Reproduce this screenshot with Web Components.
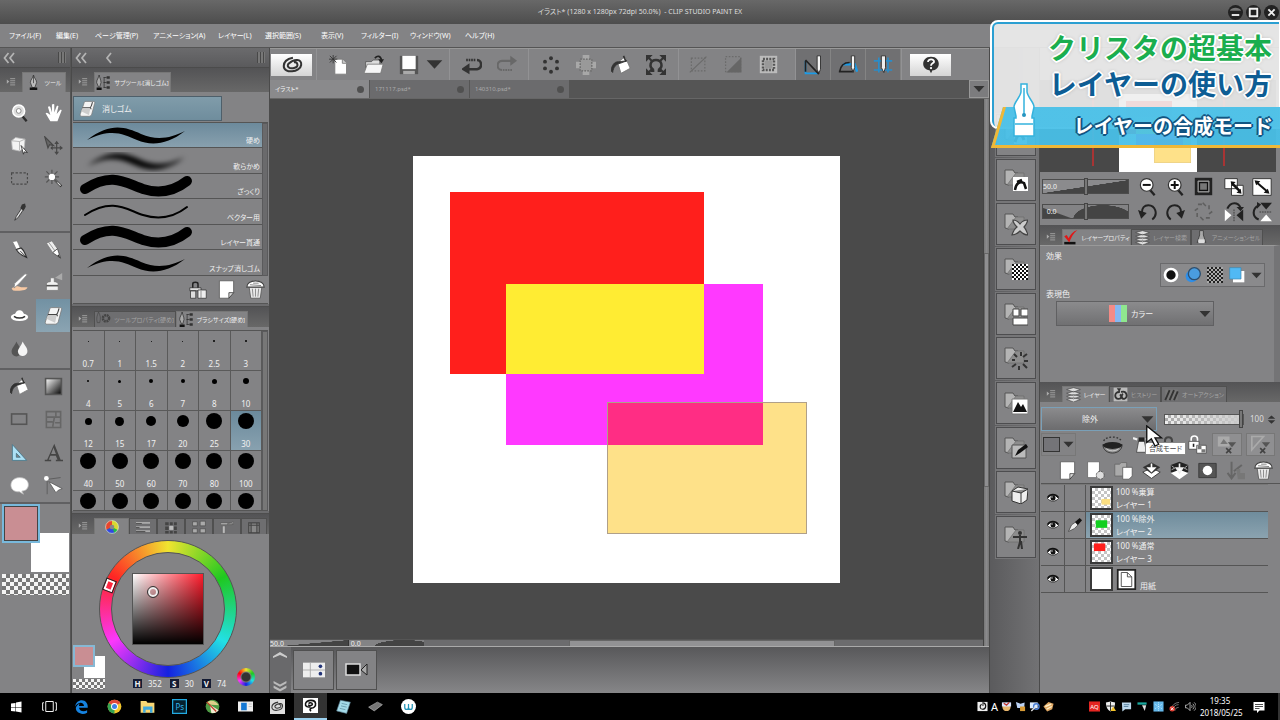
<!DOCTYPE html>
<html lang="ja">
<head>
<meta charset="utf-8">
<meta name="viewport" content="width=device-width, initial-scale=1">
<title>CLIP STUDIO PAINT EX</title>
<style>
body{margin:0;background:#4a4a4a;color:#f0f0f0;font:8px/12px "Noto Sans","Noto Sans CJK JP",sans-serif;font-feature-settings:"palt"}
</style>
</head>
<body>
<paint-app></paint-app>
<script>
const W='#f4f4f4', K='#2c2c2c', G='#6c6c6c';
const folder='<path d="M1 16V2h8l2 3h3L5 17z" fill="#b4b4b4" stroke="#555"/><path d="M3 17 12 5h8v12z" fill="#8d8d8d" stroke="#666" stroke-width=".6"/>';
/* every glyph is drawn on a 24 x 24 field */
const ICONS={
 zoom:`<path d="M16 17l5 6" stroke="${K}" stroke-width="3"/><circle cx="11" cy="10" r="7.5" fill="#ddd" stroke="#fff" stroke-width="2"/><circle cx="11" cy="10" r="3" fill="#fff" stroke="#777"/>`,
 hand:`<path d="M8 23 2 13c1-1 2-1 3 0l3 2L5 5c1-1 2-1 3 0l2 7V2c1-1 3-1 3 0v10l3-8c1-1 3 0 2 1l-2 9 4-5c1-1 3 0 2 1l-5 13z" fill="#fff"/>`,
 cube:`<path d="M2 6 7 2l12 2-1 11-6 4-9-2z" fill="#f3f3f3" stroke="#bbb"/><path d="M2 6l10 1 7-3M12 7v11" fill="none" stroke="#aaa"/><path d="M14 12l8 9-4-1-1 3z" fill="#fff" stroke="${K}"/>`,
 move:`<path d="M1 1l4 14 2-4 5 1z" fill="#666" stroke="#484848" stroke-width="1.5"/><path d="M16 8v13M9 15h13" stroke="#484848" stroke-width="1.5"/><path d="M16 6l-3 4h6zM16 24l-3-4h6zM24 15l-4-3v6zM8 15l3-3v6z" fill="#484848"/>`,
 marquee:`<rect x="2" y="5" width="20" height="14" fill="none" stroke="#4a4a4a" stroke-width="1.5" stroke-dasharray="3 2"/>`,
 wand:`<path d="M10 10l12 12" stroke="#333" stroke-width="3"/><path d="M10 10l11 11" stroke="#ddd" stroke-width="1.500"/><path d="M10 1v18M1 10h18M3 3l14 14M17 3 3 17" stroke="#555" stroke-width="1.500"/><circle cx="10" cy="10" r="4" fill="#fff"/>`,
 dropper:`<path d="M16 6 8 18 6 23l4-3 8-12z" fill="#ddd" stroke="${K}"/><path d="M15 3l4-1 1 4-3 5-4-3z" fill="#333"/>`,
 pen:`<path d="M3 2 9 1l4 9-5 2z" fill="#fff" stroke="#777"/><path d="M8 12l6-2c4 3 5 7 7 12-5-2-10-4-13-10z" fill="#eee" stroke="#333" stroke-width="1.500"/><path d="M13 14l8 8" stroke="#222"/>`,
 pencil:`<path d="M3 4 10 1l7 10-6 5z" fill="#eee" stroke="#777"/><path d="M6 3l8 11" stroke="#888"/><path d="M11 16l6-5 4 12z" fill="#fff" stroke="#444"/><path d="M18 18l3 5-4-3z" fill="#222"/>`,
 brush:`<path d="M2 20c4-5 8-4 12-2l8 0c0 4-10 5-18 4z" fill="#f7c9a4"/><path d="M22 2 11 14l-6 5 1-6L19 1z" fill="#fff" stroke="#888"/>`,
 air:`<path d="M14 6l9-6v9z" fill="#aaa"/><path d="M3 22V15c0-3 2-4 5-4V6h5v5c3 0 5 1 5 4v7z" fill="#f1f1f1" stroke="#777"/><path d="M3 16h15" stroke="#555" stroke-width="2"/>`,
 deco:`<path d="M6 12C7 3 17 3 18 12z" fill="#fff"/><ellipse cx="12" cy="14" rx="11" ry="5" fill="#fff"/><path d="M5 13c4 3 10 3 14 0" fill="none" stroke="#333" stroke-width="2"/>`,
 eraser:`<path d="M10 2h10c2 0 3 1 2 3l-4 15c-1 2-2 3-4 3H4c-2 0-3-1-2-4L7 5c0-2 1-3 3-3z" fill="#f4f4f4" stroke="#777"/><path d="M5 11h10c2 0 2 1 2 2M15 11c1 0 3-4 4-8" fill="none" stroke="#444" stroke-width="1.500"/><path d="M3 16l2-4h11l-2 9z" fill="#ccc"/>`,
 blend:`<path d="M8 3c3 6 6 8 6 13a6 6 0 0 1-12 0C2 11 6 9 8 3z" fill="#555"/><path d="M16 3c3 6 6 8 6 12a6 6 0 0 1-12 1c0-4 4-7 6-13z" fill="#f5f5f5"/>`,
 fill:`<path d="M8 9 17 2l6 14-11 6z" fill="#fff" stroke="#777"/><path d="M15 1l3 7" stroke="#333" stroke-width="2"/><path d="M19 7l-8 3C6 11 3 14 2 21l-2-2c1-7 4-11 9-11z" fill="#333" stroke="#333"/>`,
 grad:`<defs><linearGradient id="a" x1="0" y1="0" x2="1" y2="1"><stop stop-color="#fff"/><stop offset="1" stop-color="#000"/></linearGradient></defs><rect x="2" y="2" width="20" height="20" fill="url(#a)" stroke="#555" stroke-width="2"/>`,
 rect:`<rect x="2" y="5" width="19" height="13" fill="none" stroke="#555" stroke-width="2"/>`,
 frame:`<path d="M3 2h18v20H3zM3 9h18M15 2v7M13 10l-2 11M4 15h7M14 16h6" fill="none" stroke="#666" stroke-width="2"/>`,
 ruler:`<path d="M3 2l18 20H3zM8 13v5h5z" fill="#ace0f5" fill-rule="evenodd" stroke="#417184"/>`,
 text:`<path d="M13 1l8 20h3v2h-9v-2h2l-2-5H8l-2 5h3v2H1v-2h3zM12 6l-3 8h6z" fill="#454545"/>`,
 balloon:`<path d="M12 2c15 0 14 17 3 17l2 4-5-3C-3 21-2 2 12 2z" fill="#fff" stroke="#bbb"/>`,
 line:`<path d="M4 3v20M0 4h6l15-2" fill="none" stroke="#555"/><circle cx="3" cy="3" r="3" fill="#fff"/><path d="M6 7l17 9-5 2-3 3z" fill="#fff" stroke="#555"/>`,
 hut:`<path d="M1 9h15v4H1zM2 13h7v10H2z" fill="#ddd" stroke="#333"/><path d="M12 12h11v11H12z" fill="#eee" stroke="#333"/><path d="M16 13v10" stroke="#777"/><path d="M5 9V4c0-3 7-3 7 0v5" fill="none" stroke="#222" stroke-width="2"/>`,
 page:`<path d="M3 1h18v15l-6 7H3z" fill="#fff" stroke="#555"/><path d="M21 16h-6v7z" fill="#ddd" stroke="#333"/>`,
 trash:`<path d="M4 9h16l-2 14H6z" fill="#e8e8e8" stroke="#555"/><path d="M8 11l1 10M12 11v10M16 11l-1 10" stroke="#777"/><path d="M1 9c0-5 5-8 11-8s11 3 11 8z" fill="#fff" stroke="#444" stroke-width="1.5"/><path d="M5 6l14 1M9 4h7" stroke="#666"/>`,
 spiral:`<path d="M14 9c4-1 6 5 1 6-6 2-10-2-6-5 5-5 14-5 13 2-1 8-19 10-19 1C3 8 8 5 13 4" fill="none" stroke="#333" stroke-width="2.2"/>`,
 newdoc:`<path d="M7 5h9l5 5v13H7z" fill="#fff" stroke="#777"/><path d="M16 5v5h5" fill="#ccc" stroke="#777"/><path d="M5 0v10M0 5h10M1 1l8 8M9 1L1 9" stroke="#333"/>`,
 open:`<path d="M2 8h7l2-2h8v16H2z" fill="#ddd" stroke="#555"/><path d="M0 22 4 11h19l-3 11z" fill="#f6f6f6" stroke="#777"/><path d="M13 4c3-4 7-3 8 2" fill="none" stroke="#222" stroke-width="2"/><path d="M17 5h7l-3 5z" fill="#222"/>`,
 save:`<path d="M1 1h22v22H1z" fill="#555"/><path d="M4 1h16v16H4z" fill="#fff"/><path d="M5 19h14v4H5z" fill="#aaa"/>`,
 down:`<path d="M1 6h22L12 18z" fill="#333"/>`,
 undo:`<path d="M4 17h14c7-1 6-11 0-11" fill="none" stroke="#333" stroke-width="3"/><path d="M9 10v13L-1 17z" fill="#333"/><path d="M5 6h12" stroke="#333" stroke-width="3" stroke-dasharray="2 1"/>`,
 redo:`<path d="M20 7H6c-7 0-7 11 0 11" fill="none" stroke="#686868" stroke-width="2.5"/><path d="M16 1v12l8-6z" fill="#686868"/><path d="M7 18h12" stroke="#686868" stroke-width="2.500" stroke-dasharray="2 1"/>`,
 dots:`<g fill="#333"><circle cx="12" cy="3" r="2.600"/><circle cx="20" cy="7.500" r="2.600"/><circle cx="20" cy="16.500" r="2.600"/><circle cx="12" cy="21" r="2.600"/><circle cx="4" cy="16.500" r="2.600"/><circle cx="4" cy="7.500" r="2.600"/></g>`,
 outer:`<path d="M8 0h8v24H8zM0 8h24v8H0z" fill="#a8a8a8"/><rect x="5" y="5" width="14" height="14" fill="#999" stroke="#666" stroke-width="1.5" stroke-dasharray="2 1.5"/>`,
 scale:`<path d="M9 18c-6-4-4-12 3-12s9 8 3 12M6 19h4M14 19h4" fill="none" stroke="#333" stroke-width="3"/><path d="M2 2l6 6M22 2l-6 6M2 22l5-5M22 22l-5-5" stroke="#333" stroke-width="2.5"/><path d="M0 0h8l-8 8zM24 0h-8l8 8zM0 24h8l-8-8zM24 24h-8l8-8z" fill="#333"/>`,
 nosel:`<rect x="3" y="4" width="17" height="16" fill="none" stroke="#6b6b6b" stroke-width="1.5" stroke-dasharray="2 2"/><path d="M1 22 22 2" stroke="#6b6b6b" stroke-width="1.5"/>`,
 invsel:`<path d="M2 2h19v19H2z" fill="none" stroke="#6b6b6b" stroke-width="1.5" stroke-dasharray="2 2"/><path d="M22 3v19H3z" fill="#666"/>`,
 selb:`<path d="M1 1h22v22H1z" fill="#bbb"/><path d="M7 7h10v10H7z" fill="#999"/><path d="M5 5h14v14H5z" fill="none" stroke="#555" stroke-width="3" stroke-dasharray="2.500 1.500"/>`,
 snap1:`<path d="M3 7v15h15" fill="none" stroke="#1a9be8" stroke-width="2"/><path d="M3 6l16 17M3 7v13" fill="none" stroke="#222" stroke-width="2"/><path d="M17 1h4v16l-2 5-2-5z" fill="#f4f4f4" stroke="#222"/>`,
 snap2:`<path d="M6 11h14l3 9" fill="none" stroke="#1a9be8" stroke-width="3"/><path d="M2 20c1-7 5-11 12-11M1 20h18" fill="none" stroke="#222" stroke-width="2"/><path d="M16 1h4v14l-2 5-2-5z" fill="#f4f4f4" stroke="#222"/>`,
 snap3:`<path d="M1 7h22M1 18h22M7 3v18M18 3v18" stroke="#2a8cc8" stroke-width="2"/><path d="M10 1h5v14l-2 6-3-6z" fill="#eee" stroke="#222"/>`,
 help:`<path d="M12 1c14 0 13 18 2 18l-2 4-2-4C-2 18-1 1 12 1z" fill="#333"/><path d="M8 8c0-5 9-4 8 0-1 2-4 2-4 5" fill="none" stroke="#fff" stroke-width="2.4"/><circle cx="12" cy="16" r="1.5" fill="#fff"/>`,
 nib:`<path d="M12 0c1 5 5 8 5 12l-3 8H10L7 12c0-4 4-7 5-12z" fill="#bbb" stroke="#222"/><path d="M12 2v11" stroke="#222"/><path d="M6 20h12v4H6z" fill="#111"/>`,
 nodes:`<path d="M5 0c1 5 3 8 3 12l-2 7H4l-3-7c0-4 3-7 4-12z" fill="#aaa" stroke="#222"/><path d="M1 20h8v4H1z" fill="#111"/><path d="M12 4h5M12 12h5M12 20h5M13 4v16" stroke="#222"/><path d="M17 2h5v4h-5zM17 10h5v4h-5zM17 18h5v4h-5z" fill="#333"/>`,
 gear:`<path d="M4 0c3 6 4 9 2 17l-4 0c-2-8 0-11 2-17z" fill="none" stroke="#444"/><circle cx="16" cy="10" r="5" fill="none" stroke="#444" stroke-width="4" stroke-dasharray="3 1"/>`,
 bars:`<path d="M0 5h24M0 12h24M0 19h24" stroke="#aaa" stroke-width="3"/><path d="M0 6h10M0 13h6M0 20h16" stroke="#555" stroke-width="2"/>`,
 around:`<path d="M2 4h6v5H2zM10 4h5v5h-5zM17 4h5v5h-5zM2 11h6v6H2zM17 11h5v6h-5zM2 19h6v4H2zM10 19h5v4h-5zM17 19h5v4h-5z" fill="#444"/><path d="M9 10h7v7H9z" fill="#bbb"/>`,
 mixsq:`<path d="M1 3h8v7H1zM14 2h9v8h-9zM1 15h8v7H1zM14 15h9v7h-9z" fill="#aaa" stroke="#444"/>`,
 hist:`<path d="M1 5h20v3H1zM4 10h5v13H4zM12 7l11-4v4z" fill="#bbb" stroke="#555"/>`,
 film:`<path d="M3 5h18v17H3zM3 9h18M7 5v17M17 5v17" fill="#888" stroke="#444" stroke-width="2"/>`,
 zminus:`<path d="M15 16l6 7" stroke="#222" stroke-width="3"/><circle cx="11" cy="10" r="8" fill="#fff" stroke="#333" stroke-width="1.5"/><path d="M6 10h10" stroke="#111" stroke-width="2.5"/>`,
 zplus:`<path d="M15 16l6 7" stroke="#222" stroke-width="3"/><circle cx="11" cy="10" r="8" fill="#fff" stroke="#333" stroke-width="1.5"/><path d="M6 10h10M11 5v10" stroke="#111" stroke-width="2.5"/>`,
 fit:`<path d="M1 1h22v22H1z" fill="#222"/><path d="M5 5h14v14H5z" fill="#777" stroke="#aaa"/><path d="M7 7h10v10H7z" fill="#777" stroke="#111" stroke-width="1.5"/>`,
 win2:`<path d="M1 2h15v12H1zM9 10h14v12H9z" fill="#fff" stroke="#222"/><path d="M10 8l9 9" stroke="#111" stroke-width="3"/><path d="M8 5l6 1-5 5zM21 20l-6-1 5-5z" fill="#111"/>`,
 win1:`<path d="M1 2h22v20H1z" fill="#fff" stroke="#222"/><path d="M5 6l14 12" stroke="#111" stroke-width="2.5"/><path d="M3 4l7 1-5 5zM21 20l-7-1 5-5z" fill="#111"/>`,
 rotl:`<path d="M18 22c8-6 4-18-5-18-5 0-8 4-8 9" fill="none" stroke="#222" stroke-width="2.500"/><path d="M0 10l11 4-7 7z" fill="#222"/>`,
 rotr:`<path d="M6 22C-2 16 2 4 11 4c5 0 8 4 8 9" fill="none" stroke="#222" stroke-width="2.500"/><path d="M24 10l-11 4 7 7z" fill="#222"/>`,
 burst:`<g stroke="#5f5f5f" stroke-width="2"><path d="M11 1l4 4M19 4l0 5M23 12l-4 3M20 20h-5M12 23l-4-4M4 19v-5M1 11l4-3M5 3h5"/></g>`,
 fliph:`<path d="M4 8C8-1 17 0 20 7" fill="none" stroke="#222" stroke-width="2.5"/><path d="M15 6h9l-4 5z" fill="#222"/><path d="M1 9v14l8-7z" fill="#fff"/><path d="M23 9v14l-8-7z" fill="#222"/><path d="M12 9v15" stroke="#333" stroke-dasharray="2 1"/>`,
 flipv:`<path d="M8 4c-8 4-8 14 0 17" fill="none" stroke="#222" stroke-width="2.5"/><path d="M6 0v8l5-5z" fill="#222"/><path d="M10 1h14l-7 8z" fill="#222"/><path d="M10 23h14l-7-8z" fill="#fff"/><path d="M9 12h15" stroke="#333" stroke-dasharray="2 1"/>`,
 check:`<path d="M2 19h18v4H2z" fill="#111"/><path d="M2 10l4-2 3 5C12 7 16 2 23 0 16 6 13 12 10 20z" fill="#e01818"/>`,
 stack:`<path d="M1 4l11-3 11 3-11 4zM1 10l11-3 11 3-11 4zM1 15l11-3 11 3-11 4zM1 20l11-3 11 3-11 4z" fill="#ddd" stroke="#444"/>`,
 flask:`<path d="M9 1h6v7l4 12H5L9 8z" fill="#aaa" stroke="#444" stroke-width="1.5"/><path d="M7 15h10v6H7z" fill="#ddd"/>`,
 histy:`<path d="M1 1h22v22H1z" fill="#bbb"/><path d="M11 8c-10-1-9 12-2 11 5 0 5-5 2-7M13 8c9-3 12 9 5 11-5 0-5-6-2-8" fill="none" stroke="#333" stroke-width="3"/><path d="M6 2h7l-3 6z" fill="#333"/>`,
 clap:`<path d="M2 4h20v17H2z" fill="#777"/><path d="M2 21 9 5M9 21l7-16M16 21l6-14" stroke="#333" stroke-width="3"/>`,
 circle:`<circle cx="12" cy="12" r="9" fill="#111" stroke="#fff" stroke-width="4"/>`,
 tone:`<circle cx="10" cy="14" r="9" fill="#2f8fe8"/><circle cx="14" cy="10" r="9" fill="#4a9de0" stroke="#2d4f70" stroke-width="2"/>`,
 chk:`<path d="M0 0h24v24H0z" fill="#aaa"/><path d="M1.500 0v24M7.500 0v24M13.500 0v24M19.500 0v24" stroke="#222" stroke-width="3" stroke-dasharray="3"/><path d="M4.500 3v21M10.500 3v21M16.500 3v21M22.500 3v21" stroke="#222" stroke-width="3" stroke-dasharray="3"/>`,
 layc:`<path d="M6 6h17v17H6z" fill="#fff"/><path d="M1 1h17v17H1z" fill="#51b9f4" stroke="#3d86b0"/>`,
 clipmask:`<path d="M1 12c0 13 22 13 22 0z" fill="#888" stroke="#333"/><ellipse cx="12" cy="13" rx="11" ry="4" fill="#222"/><path d="M5 17c4 3 10 3 14 0" stroke="#ddd" fill="none"/><path d="M2 8c2-6 18-6 20 0" fill="none" stroke="#333" stroke-width="1.500" stroke-dasharray="2"/>`,
 light:`<path d="M8 7h8l3 16H5z" fill="#eee" stroke="#333"/><path d="M8 2h8v6H8z" fill="#222"/><path d="M0 3l6 2M24 3l-6 2" stroke="#eee" stroke-width="3"/>`,
 lock:`<path d="M7 11V7c0-7 10-7 10 0v4" fill="none" stroke="#444" stroke-width="3"/><path d="M4 11h16v12H4z" fill="#777" stroke="#333"/>`,
 lockpx:`<path d="M4 8V5c0-5 8-5 8 0v3" fill="none" stroke="#fff" stroke-width="2"/><path d="M1 8h13v10H1z" fill="#fff" stroke="#444"/><path d="M7 11v4" stroke="#222" stroke-width="2"/><path d="M11 13h12v10H11z" fill="#fff" stroke="#444"/><path d="M12 14h5v4h-5zM17 18h5v4h-5z" fill="#777"/>`,
 maskoff:`<path d="M1 3h14v12H1z" fill="#aaa"/><path d="M4 12l4-6 5 6z" fill="#777"/><path d="M13 10h10l-5 6z" fill="#555"/><path d="M11 17l6 6M17 17l-6 6" stroke="#444" stroke-width="2"/>`,
 ruleroff:`<path d="M1 3h14L1 19z" fill="none" stroke="#aaa" stroke-width="2"/><path d="M13 10h10l-5 6z" fill="#555"/><path d="M11 17l6 6M17 17l-6 6" stroke="#444" stroke-width="2"/>`,
 pageplus:`<path d="M2 1h15v20H2z" fill="#fff" stroke="#666"/><circle cx="18" cy="18" r="5" fill="#ddd" stroke="#444" stroke-dasharray="3 1"/>`,
 pagefold:`<path d="M1 4h6l2-2h7v17H1z" fill="#aaa" stroke="#666"/><path d="M11 8h12v11l-4 4h-8z" fill="#fff" stroke="#555"/>`,
 merge:`<path d="M1 14l11-5 11 5-11 8z" fill="#fff" stroke="#222"/><path d="M1 8l11-6 11 6-11 8z" fill="#333"/><path d="M12 3v8M8 9l4 4 4-4z" stroke="#fff" stroke-width="2" fill="#fff"/>`,
 merge2:`<path d="M1 5l11-4 11 4v9l-11 8-11-8z" fill="#222"/><path d="M1 15l11-4 11 4-11 8z" fill="#fff"/><path d="M2 6l4 3-4 2M22 6l-4 3 4 2" stroke="#ccc"/><path d="M12 3v7M8 9l4 6 4-6z" stroke="#eee" stroke-width="2" fill="#fff"/>`,
 mask:`<path d="M1 3h22v18H1z" fill="#555" stroke="#333"/><circle cx="12" cy="12" r="6" fill="#fff"/>`,
 apply:`<path d="M7 1v20M2 15l5 7 5-7M10 13l10-8" stroke="#666" stroke-width="2.500" fill="none"/><path d="M13 10h5v5h6v8h-9z" fill="#777"/>`,
 eye:`<path d="M1 13C6 5 17 4 23 13 17 20 7 20 1 13z" fill="#fff" stroke="#111" stroke-width="1.5"/><circle cx="12" cy="12" r="5" fill="#111"/><circle cx="10" cy="10" r="1.3" fill="#fff"/><path d="M1 11C6 3 17 3 23 11" fill="none" stroke="#111" stroke-width="3"/>`,
 inkpen:`<path d="M1 23 6 12l7-5 4 5-6 6z" fill="#eee" stroke="#222"/><path d="M12 7 20 0l4 4-7 8z" fill="#111"/>`,
 paper:`<path d="M2 1h20v22H2z" fill="#fff" stroke="#222" stroke-width="2"/><path d="M6 4h7l5 5v11H6zM13 4v5h5" fill="#fff" stroke="#444"/>`,
 f0:folder+`<path d="M10 10h13v11H10z" fill="#fff"/><path d="M11 19c3-10 7-8 9-2" stroke="#111" stroke-width="3" fill="none"/>`,
 f1:folder+`<path d="M9 9h15v14H9z" fill="#fff"/><path d="M11 22c1-7 5-9 9-7l2 6M13 14l5-2" stroke="#111" stroke-width="2.5" fill="none"/>`,
 f2:folder+`<path d="M9 8c3 0 5 1 7 4 2-3 5-4 8-4-1 3-2 5-4 7 2 2 3 5 4 8-3 0-6-2-8-4-2 2-5 4-8 4 1-3 2-6 5-8-2-2-4-4-4-7z" fill="#ccc" stroke="#444" stroke-width="1.2"/>`,
 f3:folder+`<path d="M8 7h16v16H8z" fill="#fff"/><path d="M9 7v16M13 7v16M17 7v16M21 7v16" stroke="#111" stroke-width="2" stroke-dasharray="2"/><path d="M11 9v14M15 9v14M19 9v14M23 9v14" stroke="#111" stroke-width="2" stroke-dasharray="2"/>`,
 f4:folder+`<path d="M9 7h6v7H9zM17 7h7v7h-7zM9 16h15v7H9z" fill="#fff" stroke="#444"/>`,
 f5:folder+`<path d="M10 8l3 3M17 6v4M23 8l-4 3M24 15h-4M23 22l-4-4M15 24v-4M8 21l4-3M8 14h3" stroke="#333" stroke-width="2"/>`,
 f6:folder+`<path d="M8 8h16v15H8z" fill="#fff" stroke="#777"/><path d="M9 21l5-10 3 5 2-3 4 8z" fill="#111"/>`,
 f7:folder+`<path d="M8 9h14v13H8z" fill="#bbb" stroke="#555"/><path d="M11 20l3-6 8-6 2 3-8 6z" fill="#111"/>`,
 f8:folder+`<path d="M8 11l6-4 10 2-1 11-6 4-9-3zM8 11l9 2 7-4M17 13v11" fill="#eee" stroke="#333"/>`,
 f9:folder+`<circle cx="16" cy="8" r="2" fill="#333"/><path d="M9 12h14M16 10v7l-2 7M17 16l1 8" stroke="#333" stroke-width="2" fill="none"/>`,
 chevup:`<path d="M12 7 0 14v3l12-5 12 5v-3z" fill="#ccc"/>`,
 chevdn:`<path d="M12 11 1 5v4l11 6 11-6V5zM12 19 1 13v4l11 6 11-6v-4z" fill="#bbb"/>`,
 timeline:`<path d="M0 4h24v16H0z" fill="#eee"/><path d="M0 12h24M8 4v16" stroke="#aaa"/><circle cx="19" cy="8" r="2" fill="#237"/><circle cx="19" cy="16" r="2" fill="#237"/>`,
 camera:`<path d="M1 6h14v11H1z" fill="#111" stroke="#ddd" stroke-width="1.500"/><path d="M16 12l6-6v11z" fill="#aaa" stroke="#222"/>`,
 winlogo:`<path d="M2 5l9-1v8H2zM12 3l11-2v11H12zM2 13h9v8l-9-1zM12 13h11v10l-11-2z" fill="#fff"/>`,
 taskview:`<path d="M6 4h12v16H6zM3 6H1v12h2M21 6h2v12h-2" fill="none" stroke="#fff" stroke-width="1.500"/>`,
 edge:`<path d="M2 12C3 2 15-1 20 6c2 3 2 5 2 8H8c1 6 8 7 13 4v4C12 27 2 21 3 14c1-4 4-6 7-7-2 1-2 3-2 4h8c0-6-9-8-14 1z" fill="#1683e0"/>`,
 chrome:`<circle cx="12" cy="12" r="11" fill="#f2c62c"/><path d="M12 12 2.500 6.500A11 11 0 0 1 21.500 6.500z" fill="#e0483a"/><path d="M12 12 2.500 6.500A11 11 0 0 0 12 23z" fill="#34a353"/><circle cx="12" cy="12" r="5.500" fill="#fff"/><circle cx="12" cy="12" r="4" fill="#3c80e8"/>`,
 explorer:`<path d="M1 3h9l2 3h11v16H1z" fill="#f8d775"/><path d="M5 12h15v10h-4v-5H9v5H5z" fill="#3fa9dd"/>`,
 pschop:`<path d="M1 1h22v22H1z" fill="#05202e" stroke="#22a9e0" stroke-width="2"/>`,
 paintapp:`<circle cx="12" cy="12" r="11" fill="#4f9b45"/><path d="M2 6c7-6 16-3 20 4L10 9z" fill="#ddd08a"/><path d="M8 9l14 9c-4 5-9 5-12 4z" fill="#f2ead1"/><path d="M3 5l15 15" stroke="#c03b28" stroke-width="2"/>`,
 appwin:`<path d="M0 4h24v16H0z" fill="#eee"/><path d="M5 6h9v12H5z" fill="#1478d4"/><path d="M17 8h5M17 12h5" stroke="#aaa"/>`,
 studio:`<path d="M0 0h24v24H0z" fill="#ddd"/><path d="M14 9c4-1 5 4 1 5-6 2-9-1-6-4 5-4 12-4 11 2-1 7-17 9-17 1 0-4 5-7 10-8" fill="none" stroke="#333" stroke-width="1.700"/>`,
 paint:`<path d="M0 0h24v24H0z" fill="#fff"/><path d="M12 14c-4 1-9 0-8-5C6 2 20 2 20 9c1 5-4 7-6 7-3 1-4 3-1 5M9 9c1-2 6-2 6 1 0 2-4 3-7 1" fill="none" stroke="#111" stroke-width="2.500"/>`,
 note:`<path d="M7 2l16 3-6 18-16-4z" fill="#a5dbe9" stroke="#578"/><path d="M9 7l9 2M8 11l9 2M6 15l9 2" stroke="#4c7f94"/>`,
 tablet:`<path d="M1 13 15 5l8 4-13 10z" fill="#777" stroke="#bbb"/>`,
 wmark:`<circle cx="12" cy="12" r="12" fill="#fff"/><path d="M6 8v5c0 5 6 5 6 0V8v5c0 5 6 5 6 0V8" fill="none" stroke="#2394b8" stroke-width="2"/>`,
 ime:`<path d="M1 2h22v20H1z" fill="#eee"/><path d="M14 4c7 2 7 14-2 14-6 0-7-8-2-11" fill="none" stroke="#111" stroke-width="2.500"/><path d="M13 2v9" stroke="#111" stroke-width="2"/>`,
 t1:`<circle cx="12" cy="13" r="9" fill="#e7b56c"/><path d="M2 3h20v9H2z" fill="#dde7ff"/><path d="M6 5l6 4 6-6" stroke="#c4352c" stroke-width="3" fill="none"/>`,
 t2:`<path d="M2 2l10 4 9-3-1 12H5z" fill="#bcd3f5"/><path d="M11 12h11v10H11z" fill="#d89b36"/>`,
 t3:`<path d="M2 3h17v13H2z" fill="#ddecff"/><circle cx="16" cy="12" r="6" fill="none" stroke="#4b7fd6" stroke-width="3"/><path d="M5 22l9-9" stroke="#ddd" stroke-width="3"/>`,
 t4:`<path d="M1 12 12 2l11 4-3 12-11 5z" fill="#e0a865"/><path d="M5 12l13-5M8 18l11-6" stroke="#fff1ca" stroke-width="3"/>`,
 adobe:`<path d="M0 1h24v22H0z" fill="#e52521"/>`,
 shield:`<path d="M2 3l10-2 10 2c0 10-3 16-10 20C5 19 2 13 2 3z" fill="#eee"/><path d="M12 2v20M3 11h18" stroke="#222" stroke-width="2"/><path d="M12 22l6-10 6 10z" fill="#f4c42b"/>`,
 memo:`<path d="M2 3h20v15H9l-6 5z" fill="#bcd8ec"/><path d="M6 8h12M6 12h10" stroke="#58809c" stroke-width="2"/>`,
 pent:`<path d="M1 3h20v5H1z" fill="#18a79e"/><path d="M11 9h9l-3 13z" fill="#ddd"/>`,
 snow:`<path d="M1 1h22v22H1z" fill="#65b8ea"/><path d="M12 3v18M4 7l16 10M20 7 4 17" stroke="#c9ecff" stroke-width="2" stroke-dasharray="2"/>`,
 net:`<path d="M9 20C9 12 14 8 21 8M13 21c0-4 3-7 8-7M5 17C7 9 12 4 22 3" fill="none" stroke="#777" stroke-width="2"/><circle cx="7" cy="17" r="6" fill="#e03b2f"/><path d="M4 14l6 6M10 14l-6 6" stroke="#fff" stroke-width="2"/>`,
 vol:`<path d="M1 9h4l6-6v18l-6-6H1zM14 9c2 2 2 4 0 6M17 6c4 4 4 8 0 12M20 3c6 6 6 12 0 18" fill="none" stroke="#eee" stroke-width="1.500"/>`,
 notif:`<path d="M1 2h22v17H13l-5 5v-5H1z" fill="#fff"/><path d="M4 7h16M4 11h16M4 15h9" stroke="#111" stroke-width="1.500"/>`,
 minb:`<circle cx="12" cy="12" r="12" fill="#222"/><path d="M3 9c3-6 15-6 18 0z" fill="#777"/><path d="M6 16h12" stroke="#eee" stroke-width="3"/>`,
 maxb:`<circle cx="12" cy="12" r="12" fill="#222"/><path d="M6 6h12v12H6z" fill="none" stroke="#eee" stroke-width="3"/>`,
 closeb:`<circle cx="12" cy="12" r="12" fill="#222"/><path d="M7 7l10 10M17 7 7 17" stroke="#eee" stroke-width="3"/>`,
 pmenu:`<path d="M2 6v10l6-5z" fill="#aaa"/><path d="M10 4h12M10 9h12M10 14h12M10 19h12" stroke="#aaa" stroke-width="2"/>`,
 chev2:`<path d="M11 2 3 12l8 10M22 2l-8 10 8 10" fill="none" stroke="#b4b4b4" stroke-width="3.500"/>`,
 chev1:`<path d="M16 2 8 12l8 10" fill="none" stroke="#b4b4b4" stroke-width="3.500"/>`,
 spin:`<path d="M2 10h20L12 1zM2 14h20l-10 9z" fill="#333"/>`,
 wheelc:`<circle cx="12" cy="12" r="11" fill="#22b84a"/><path d="M12 12V1A11 11 0 0 1 22 17z" fill="#d8d830"/><path d="M12 12V1A11 11 0 0 0 2 17z" fill="#e8452c"/><path d="M12 12 2 17a11 11 0 0 0 14 5z" fill="#3348e0"/><circle cx="12" cy="12" r="4" fill="#888"/><circle cx="12" cy="12" r="11" stroke="#eee"/>`,
 cursor:`<path d="M3 1v18l5-4 4 8 4-2-4-7h7z" fill="#fff" stroke="#111" stroke-width="1.500"/>`
};
const BASE=`*{box-sizing:border-box}button,select,input{font:inherit;color:inherit;font-feature-settings:inherit}button{appearance:none;border:0;background:none;padding:0;margin:0;display:grid;place-items:center}`;
function define(name,css,html){
  customElements.define(name,class extends HTMLElement{
    connectedCallback(){
      if(this.shadowRoot)return;
      const t=document.createElement('template');
      t.innerHTML=`<style>${BASE}${css}</style>${typeof html==='function'?html(this):html}`;
      this.attachShadow({mode:'open'}).append(t.content.cloneNode(true));
    }
  });
}
const ic=(n,s=20)=>`<ui-icon name="${n}" size="${s}"></ui-icon>`;
const btn=(n,s,label)=>`<button aria-label="${label||n}">${ic(n,s)}</button>`;
const checker=(s)=>`repeating-conic-gradient(#777 0 25%,#f4f4f4 0 50%) 0 0/${s}px ${s}px`;

define('ui-icon',`:host{display:block;flex:none}svg{display:block}`,e=>{const s=e.getAttribute('size')||20;return `<svg width="${s}" height="${s}" viewBox="0 0 24 24" fill="none">${ICONS[e.getAttribute('name')]||''}</svg>`});

define('title-bar',`:host{display:grid;grid-template-columns:1fr auto 1fr;align-items:center;height:24px;background:linear-gradient(#686868,#4d4d4d);font-size:7px;color:#ddd}.w{display:flex;gap:3px;justify-content:end;padding-right:1px}`,
 `<span></span><span>イラスト* (1280 x 1280px 72dpi 50.0%)&nbsp; - CLIP STUDIO PAINT EX</span><div class="w">${btn('minb',15,'最小化')}${btn('maxb',15,'最大化')}${btn('closeb',15,'閉じる')}</div>`);

define('menu-bar',`:host{display:block;background:#838385;height:24px;border-bottom:1px solid #555}nav{display:grid;grid-template-columns:47px 39px 58px 65px 47px 56px 40px 49px 55px 1fr;padding-left:9px;height:100%;align-items:center;justify-items:start}button{white-space:nowrap;color:#fff;font-size:7px}`,
 `<nav>${['ファイル(F)','編集(E)','ページ管理(P)','アニメーション(A)','レイヤー(L)','選択範囲(S)','表示(V)','フィルター(I)','ウィンドウ(W)','ヘルプ(H)'].map(t=>`<button>${t}</button>`).join('')}</nav>`);

define('dock-head',`:host{display:flex;align-items:center;height:20px;gap:16px;padding:0 4px 0 3px;background:linear-gradient(#6b6b6d,#5a5a5c);border-bottom:1px solid #4b4b4b}i{margin-left:auto;width:8px;height:11px;background:repeating-linear-gradient(90deg,#484848 0 1px,#777 1px 3px)}`,
 e=>`${ic('chev2',12)}${e.hasAttribute('two')?ic('chev1',12):''}<i></i>`);

/* tab strip of a docked palette: each tab is "icon|label|width" */
define('panel-tabs',`:host{display:flex;align-items:stretch;padding:4px 4px 0 0;height:20px;background:linear-gradient(#535355,#686868)}.m{width:22px;display:grid;place-items:center;flex:none}button{display:flex;align-items:center;justify-content:center;gap:3px;background:#6e6e70;border:1px solid #505050;border-bottom:0;color:#a4a4a4;font-size:6px;white-space:nowrap;flex:none}button.on{background:#838385;color:#eee;border-color:#777}`,
 e=>`<span class="m">${ic('pmenu',10)}</span>`+e.getAttribute('tabs').split(';').map((t,i)=>{const[n,l,w]=t.split('|');return `<button style="width:${w}px" class="${i==(e.getAttribute('on')||0)?'on':''}" aria-label="${l||n}">${ic(n,e.getAttribute('isize')||15)}${l?`<span>${l}</span>`:''}</button>`}).join(''));

const tools=[['zoom','hand','cube','move','marquee','wand','dropper',''],['pen','pencil','brush','air','deco','eraser','blend',''],['fill','grad','rect','frame','ruler','text','balloon','line']];
define('tool-box',`:host{display:flex;flex-direction:column;width:71px;background:#838385;border-right:1px solid #555}
.g{display:grid;grid-template-columns:34px 34px;grid-auto-rows:33px;border-bottom:2px solid #606062;padding:0 0 3px 2px}.g.z{padding-bottom:0}.on{background:linear-gradient(#7291a3,#8ba4b2)}
.h{height:24px;margin-bottom:4px}.sw{display:grid;grid-template:29px 10px 29px/29px 9px 29px;padding:0 0 0 2px}.fg{grid-area:1/1/3/3;background:#c98e93;border:2px solid #78b9dc;outline:1px solid #444;outline-offset:-3px;z-index:1}.bg{grid-area:2/2/4/4;background:#fff}.tr{height:21px;margin:2px 1px 0 2px;background:${checker(8)}}`,
 `<dock-head></dock-head><panel-tabs class="h" tabs="nib|ツール|44"></panel-tabs>${tools.map((g,i)=>`<div class="g ${i==2?'z':''}">${g.map(n=>n?`<button aria-label="${n}" class="${n=='eraser'?'on':''}">${ic(n,19)}</button>`:'<span></span>').join('')}</div>`).join('')}<div class="sw"><span class="fg"></span><span class="bg"></span></div><div class="tr"></div>`);

const wave=(w)=>`<path d="M12 15C40-3 54 10 70 15S100 18 114 7" stroke="#000" stroke-width="${w}" stroke-linecap="round" fill="none"/>`;
const taper=f=>`<path d="M14 17C38-1 52 4 68 11S98 15 112 8C94 22 78 23 64 17S38 5 14 17z" fill="#000" ${f||''}/>`;
const brushes=[['硬め',taper()],['軟らかめ',`<defs><filter id="b"><feGaussianBlur stdDeviation="2.5"/></filter></defs>`+taper('filter="url(#b)"')],['ざっくり',wave(10)],['ベクター用',wave(2)],['レイヤー貫通',wave(10)],['スナップ消しゴム',taper()]];
define('brush-list',`:host{display:block;background:#838385;padding:4px 1px 0}.head{display:flex;align-items:center;gap:6px;width:149px;height:25px;padding-left:5px;background:linear-gradient(#809caa,#6f8d9d);border:1px solid #4e5f6a}
.l{display:grid;grid-template-columns:1fr 6px;border-top:1px solid #555;margin-top:1px}.r{display:grid;grid-template-columns:1fr auto;justify-content:stretch;width:100%;height:25px;border-bottom:1px solid #555;padding-right:2px}.r:nth-child(even){height:26px}.r svg{grid-area:1/1/2/3;justify-self:start;overflow:visible}.r span{grid-area:1/2/2/3;align-self:end;font-size:7px}.on{background:linear-gradient(#6c8a9c,#88a0ae)}.s{background:#6a6a6c;border:1px solid #5a5a5c}
.f{display:flex;justify-content:end;gap:10px;height:28px;align-items:center;padding-right:3px;border-bottom:1px solid #555}`,
 `<div class="head">${ic('eraser',17)}<span>消しゴム</span></div><div class="l"><div>${brushes.map(([n,s],i)=>`<button class="r ${i?'':'on'}"><svg width="130" height="24" viewBox="0 0 130 24">${s}</svg><span>${n}</span></button>`).join('')}</div><div class="s"></div></div><div class="f">${btn('hut',18,'複製')}${btn('page',19,'新規')}${btn('trash',19,'削除')}</div>`);

const sizes=[[.7,1],[1,1],[1.5,1],[2,1],[2.5,2],[3,2],[4,2],[5,3],[6,4],[7,4],[8,5],[10,6],[12,7],[15,9],[17,10],[20,12],[25,16],[30,16],[40,16],[50,16],[60,16],[70,16],[80,16],[100,16],['',16],['',16],['',16],['',16],['',16],['',16]];
define('size-grid',`:host{display:grid;grid-template-columns:1fr 6px;height:181px;overflow:hidden;background:#838385;border-top:1px solid #555;border-bottom:1px solid #555;margin:3px 1px 0}.g{display:grid;grid-template-columns:repeat(6,1fr);grid-auto-rows:40px}button{border:solid #5a5a5a;border-width:0 1px 1px 0;grid-template-rows:20px 19px;align-items:center}i{border-radius:50%;background:#000}span{padding-top:6px}.on{background:linear-gradient(#6b8a9c,#88a1af)}.s{background:#777;border:1px solid #5a5a5c}`,
 `<div class="g">${sizes.map(([n,d])=>`<button class="${n===30?'on':''}"><i style="width:${d}px;height:${d}px"></i>${n?`<span>${n}</span>`:''}</button>`).join('')}</div><div class="s"></div>`);

define('color-panel',`:host{display:grid;grid-template-columns:26px 138px 1fr;background:#838385;padding:6px 14px 0 1px;flex:1;align-content:start}.wheel{display:grid;place-items:center;width:138px;height:138px;border-radius:50%;border:1px solid #555;background:conic-gradient(from 300deg,#ff2424,#f0e430 60deg,#1fc820 120deg,#22e0e4 180deg,#1422e0 240deg,#fb38fb 300deg,#ff2424)}.in,.wheel>*{grid-area:1/1}.in{width:114px;height:114px;border-radius:50%;background:#838385;border:1px solid #555}.sq{width:72px;height:72px;background:linear-gradient(transparent,#000),linear-gradient(90deg,#fff,#ff1c2c);border:1px solid #555;display:grid}
.sq i{width:10px;height:10px;margin:13px 0 0 15px;border:2px solid #eee;outline:1px solid #333;border-radius:50%}.mk{width:9px;height:11px;border:2px solid #fff;outline:1px solid #222;transform:rotate(21deg);place-self:start;margin:39px 0 0 5px}
.l{grid-area:1/1;align-self:end;margin-right:-6px}.sw{display:grid;grid-template:11px 11px 11px/11px 11px 10px}.a{grid-area:1/1/3/3;background:#c98e93;border:2px solid #86b8d4;z-index:1}.b{grid-area:2/2/4/4;background:#fff}.wheel{grid-area:1/2}.c{grid-area:2/1;height:10px;width:32px;margin-top:1px;background:${checker(6)}}
.v{grid-area:2/2/3/4;display:flex;padding-left:34px;gap:8px;white-space:nowrap}.v b{display:inline-block;width:9px;height:9px;line-height:9px;background:#141b33;text-align:center;margin-right:6px}.r{grid-area:1/3/3/4;justify-self:end;align-self:end;width:18px;height:18px;margin-bottom:4px;border-radius:50%;background:radial-gradient(#333 0 4px,#777 5px,transparent 6px),conic-gradient(from 300deg,red,#f0e430,#1fc820,#22e0e4,#1422e0,#fb38fb,red)}`,
 `<div class="l"><div class="sw"><span class="a"></span><span class="b"></span></div></div><div class="wheel"><div class="in"></div><div class="sq"><i></i></div><div class="mk"></div></div><div class="c"></div><div class="v"><span><b>H</b>352</span><span><b>S</b>30</span><span><b>V</b>74</span></div><div class="r"></div>`);

define('sub-dock',`:host{display:flex;flex-direction:column;width:198px;background:#838385;border-right:1px solid #4b4b4b;margin-left:1px}.gap{height:3px;background:#6c6c6e;border-bottom:1px solid #4e4e4e}.h{height:24px}`,
 `<dock-head two></dock-head><panel-tabs class="h" tabs="nodes|サブツール[消しゴム]|77"></panel-tabs><brush-list></brush-list><div class="gap"></div><panel-tabs on="1" tabs="gear|ツールプロパティ[硬め]|82;nodes|ブラシサイズ[硬め]|72"></panel-tabs><size-grid></size-grid><div class="gap"></div><panel-tabs isize="14" tabs="wheelc||35;bars||28;around||28;mixsq||28;hist||28;film||26"></panel-tabs><color-panel></color-panel>`);

define('command-bar',`:host{display:flex;height:32px;background:#838385;border-top:1px solid #999}.g{display:flex;align-items:stretch;border-right:1px solid #929294;flex:none}.g button{width:35px}.g .n{width:17px}.k button{background:#707072;border-right:1px solid #848484}.w button{width:41px;height:22px;background:linear-gradient(#fff,#d4d4d4);align-self:center}`,
 `<div class="g w" style="width:47px;padding-left:1px">${btn('spiral',22,'CLIP STUDIO')}</div><div class="g" style="padding:0 6px 0 4px">${btn('newdoc',20,'新規')}${btn('open',20,'開く')}${btn('save',20,'保存')}<button class="n" aria-label="メニュー">${ic('down',17)}</button></div><div class="g" style="padding:0 4px">${btn('undo',20)}${btn('redo',20)}</div><div class="g" style="padding:0 5px 0 4px">${['dots','outer','fill','scale'].map(n=>btn(n,n=='dots'?18:20)).join('')}</div><div class="g" style="padding:0 9px 0 2px">${['nosel','invsel','selb'].map(n=>btn(n,19)).join('')}</div><div class="g k">${['snap1','snap2','snap3'].map(n=>btn(n,20)).join('')}</div><div class="g w" style="padding-left:8px;border:0">${btn('help',18,'ヘルプ')}</div>`);

define('file-tabs',`:host{display:flex;height:19px;gap:1px;background:#555;border-bottom:1px solid #666}.t{display:flex;justify-content:space-between;align-items:center;width:99px;padding:0 5px;background:#6b6b6d;color:#aaa;font-size:6px}.on{background:#8a8a8c;color:#f2f2f2}.t::after{content:"";width:7px;height:7px;border-radius:50%;background:#505050}.d{margin-left:auto;width:20px;background:#7c7c7e;border:1px solid #999}`,
 `<button class="t on">イラスト*</button><button class="t">171117.psd*</button><button class="t">140310.psd*</button><button class="d" aria-label="一覧">${ic('down',12)}</button>`);

define('art-board',`:host{display:block;background:#fff}svg{display:block;width:100%;height:100%}`,
 `<svg viewBox="0 0 427 427" shape-rendering="crispEdges"><path d="M37 36h254v182H37z" fill="#ff1f1c"/><path d="M93 128h257v161H93z" fill="#ff39ff"/><path d="M93 128h198v90H93z" fill="#ffec33"/><path d="M194 247h199v130H194z" fill="#fee189"/><path d="M194 247h156v42H194z" fill="#ff2d84"/><path d="M194.500 246.500h199v131h-199z" fill="none" stroke="#b0a089"/></svg>`);

define('canvas-view',`:host{display:grid;grid-template:1fr 7px/1fr 6px;flex:1;background:#4a4a4a}.a{display:grid;justify-content:center;align-content:start;padding:57px 0 56px}art-board{width:427px;height:427px}.v{background:linear-gradient(90deg,#777,#8a8a8c,#777);border-left:1px solid #444;grid-area:1/2/3/3}.v i{display:block;margin-top:154px;height:234px;background:#8f8f91;border:1px solid #666}.h{display:grid;grid-template-columns:78px 1px 75px 145px 266px 1fr;background:#838385;font-size:7px;line-height:7px;border-top:1px solid #555}.z{background:linear-gradient(to bottom right,#838385 50%,#444 51%)}.q{background:radial-gradient(ellipse 30px 7px at 55px 7px,#444 0 99%,#838385)}.k{background:#333}.t{background:#6c6c6e}.b{background:#929294;border:1px solid #666}`,
 `<div class="a"><art-board></art-board></div><div class="v"><i></i></div><div class="h"><span class="z">50.0</span><span class="k"></span><span class="q">&nbsp;0.0</span><span class="t"></span><span class="b"></span><span class="t"></span></div>`);

define('time-bar',`:host{display:flex;height:47px;background:linear-gradient(#58585a,#868688);border-top:1px solid #aaa}.u{display:flex;flex-direction:column;justify-content:space-between;width:21px;padding:1px 3px;background:#69696b}.b{width:41px;height:40px;margin:3px 0 0 2px;background:#838385;border:1px solid #505050}`,
 `<div class="u">${ic('chevup',14)}${ic('chevdn',14)}</div><button class="b" aria-label="タイムライン">${ic('timeline',22)}</button><button class="b" aria-label="カメラ">${ic('camera',24)}</button>`);

define('center-area',`:host{display:flex;flex-direction:column;flex:1;min-width:0}`,`<command-bar></command-bar><file-tabs></file-tabs><canvas-view></canvas-view><time-bar></time-bar>`);

define('material-dock',`:host{display:block;width:50px;background:linear-gradient(90deg,#5b5b5d,#727274);border-left:1px solid #4a4a4a;padding:66px 3px 0 6px}.c{display:flex;flex-direction:column;justify-content:space-between;height:444px}button{width:40px;height:42px;background:#838385;border:1px solid #4d4d4f;outline:1px solid #767678}`,
 `<div class="c">${Array.from({length:10},(_,i)=>btn('f'+i,24,'素材 '+(i+1))).join('')}</div>`);

define('nav-panel',`:host{display:block;background:#838385;padding:32px 4px 0 0}.v{display:grid;grid-template-columns:1fr 78px 1fr;height:92px;background:#484848;align-items:end}.v i{justify-self:center;width:2px;height:80px;background:#a83434;align-self:center}.v i:first-of-type{margin-left:26px}.v i:last-of-type{margin-right:26px}art-board{height:78px}.c{display:grid;grid-template-columns:91px repeat(3,28px) 3px repeat(2,28px);grid-auto-rows:25px;align-items:center;padding:2px 0 1px 2px;height:53px}label{display:grid;width:87px;height:15px;border:1px solid #4c4c4c;background:linear-gradient(to bottom right,#8b8b8d 50%,#444 51%);font-size:7px;line-height:14px}label.r{background:radial-gradient(ellipse 30px 14px at 60px 14px,#444 0 98%,transparent 100%),linear-gradient(20deg,#444 0 9px,#838385 10px)}label>*{grid-area:1/1}input{appearance:none;background:none;margin:0;width:85px;height:13px}input::-webkit-slider-thumb{appearance:none;width:4px;height:17px;background:#777;border:1px solid #444}`,
 `<div class="v"><i></i><art-board></art-board><i></i></div><div class="c"><label><span>50.0</span><input type="range" aria-label="拡大率"></label>${['zminus','zplus','fit'].map(n=>btn(n,19)).join('')}<s></s>${['win2','win1'].map(n=>btn(n,20)).join('')}<label class="r"><span>&nbsp; 0.0</span><input type="range" aria-label="回転"></label>${['rotl','rotr','burst'].map(n=>btn(n,19)).join('')}<s></s>${['fliph','flipv'].map(n=>btn(n,20)).join('')}</div>`);

define('property-panel',`:host{display:grid;grid-template-rows:14px 24px 14px auto 1fr;background:#838385;height:137px;padding:3px 9px 0 6px;border-right:6px solid #747476;border-top:1px solid #999;line-height:14px}.e{justify-self:end;display:flex;align-items:center;gap:6px;padding:0 2px;border:1px solid #6a6a6c;background:#8a8a8c}.k{display:grid;grid-template-columns:18px auto;width:158px;height:25px;margin:0 0 0 10px;border:1px solid #606062;background:linear-gradient(#8b8b8d,#707072);align-items:center;padding-left:52px}.k i{height:17px;background:linear-gradient(90deg,#f48b86 33%,#85b8f2 33% 66%,#8fe78f 66%)}.k div{display:grid;align-items:center}.k select,.k ui-icon{grid-area:1/1}.k ui-icon{justify-self:end;margin-right:2px}select{appearance:none;border:0;background:none;padding:0 0 0 4px;height:22px}`,
 `<div>効果</div><div class="e">${btn('circle',16)}${btn('tone',16)}${btn('chk',16)}${btn('layc',16)}${ic('down',11)}</div><label for="c">表現色</label><div class="k"><i></i><div><select id="c"><option>カラー</option></select>${ic('down',12)}</div></div>`);

define('layer-row',`:host{display:grid;grid-template-columns:24px 21px 1fr;height:27px;border-bottom:1px solid #555}button{border-right:1px solid #555}.b{display:flex;gap:3px;align-items:center;padding-left:4px}.th{flex:none;width:23px;height:24px;border:2px solid #3a3a3a;background:repeating-conic-gradient(#c4c4c4 0 25%,#fff 0 50%) 0 0/6px 6px}:host([sel]) .b{background:linear-gradient(#6f8c9c,#8ba3b0)}:host([paper]) .th{background:#fff}::slotted(p){margin:0;line-height:13px;white-space:pre-line}svg{display:block;width:100%;height:100%}`,
 e=>`<button aria-label="表示">${ic('eye',12)}</button><button aria-label="描画">${e.hasAttribute('sel')?ic('inkpen',14):''}</button><div class="b"><span class="th"><svg viewBox="0 0 20 20"><path d="${e.getAttribute('shape')||''}" fill="${e.getAttribute('color')||'none'}"/></svg></span>${e.hasAttribute('paper')?ic('paper',21):''}<slot></slot></div>`);

define('layer-panel',`:host{display:block;background:#838385;flex:1;padding:5px 0 0 1px}.a{display:grid;grid-template-columns:116px 88px 1fr;align-items:center;height:24px}.k{display:grid;height:24px;border:1px solid #7aa0b8;background:linear-gradient(#8b8b8d,#6c6c6e);align-items:center}.k>*{grid-area:1/1}.k ui-icon{justify-self:end;margin-right:2px}select{appearance:none;border:0;background:none;padding:0 18px 0 0;text-align-last:center;width:100%;height:22px}input{appearance:none;width:80px;height:11px;margin:0 0 0 7px;background:linear-gradient(90deg,transparent,#ccc),repeating-conic-gradient(#aaa 0 25%,#eee 0 50%) 0 0/6px 6px;border:1px solid #555}input::-webkit-slider-thumb{appearance:none;width:4px;height:18px;background:#777;border:1px solid #444}.n{display:flex;align-items:center;gap:3px;padding-left:5px;color:#ddd}
.b{display:grid;grid-template-columns:35px 17px 38px 20px 35px 22px 34px 33px;align-items:center;height:26px}.b>:first-child{height:23px;border:1px solid #777;display:flex;justify-content:space-around}.b i{width:17px;height:15px;border:1px solid #333;background:#747478}.b button:nth-last-child(-n+2){background:#8f8f91;border:1px solid #777;height:23px;margin-left:4px}
.c{display:grid;grid-template-columns:repeat(8,28px);padding:0 0 0 12px;height:27px;align-items:center;border-bottom:1px solid #555}.l{border-top:1px solid #777;margin-right:12px}`,
 `<div class="a"><div class="k"><select aria-label="合成モード"><option>除外</option></select>${ic('down',13)}</div><input type="range" value="100" aria-label="不透明度"><span class="n">100 ${ic('spin',9)}</span></div><div class="b"><button aria-label="色"><i></i>${ic('down',11)}</button><span></span>${btn('clipmask',21)}${btn('light',17)}${btn('lock',17)}${btn('lockpx',19)}${btn('maskoff',20)}${btn('ruleroff',20)}</div><div class="c">${['page','pageplus','pagefold','merge','merge2','mask','apply','trash'].map(n=>btn(n,19)).join('')}</div><div class="l"><layer-row shape="M10 11h9v6h-9z" color="#fbdf82"><p>100 %乗算<br>レイヤー 1</p></layer-row><layer-row sel shape="M4 5h12v8H4z" color="#12cf20"><p>100 %除外<br>レイヤー 2</p></layer-row><layer-row shape="M2 1h12v8H2z" color="#ff1f1c"><p>100 %通常<br>レイヤー 3</p></layer-row><layer-row paper><p><br>用紙</p></layer-row></div>`);

define('right-dock',`:host{display:flex;flex-direction:column;width:241px;border-left:1px solid #4b4b4b;background:#838385}`,
 `<nav-panel></nav-panel><panel-tabs tabs="check|レイヤープロパティ|69;stack|レイヤー検索|60;flask|アニメーションセル|72"></panel-tabs><property-panel></property-panel><panel-tabs tabs="stack|レイヤー|47;histy|ヒストリー|52;clap|オートアクション|66"></panel-tabs><layer-panel></layer-panel>`);

define('promo-banner',`:host{display:block;width:289px;height:128px;color:#fff;font-family:"Noto Sans CJK JP",sans-serif;font-feature-settings:normal}.box{height:107px;border:solid #2b9fd2;border-width:3px 0 0 3px;outline:2px solid #fff;outline-offset:-1px;border-radius:7px 0 0 7px;background:#eeeeeee8;text-align:right;padding:5px 8px 0 0;font-weight:700;font-size:28px;line-height:36px;white-space:nowrap}.g,.n{text-shadow:2px 0 #fff,-2px 0 #fff,0 2px #fff,0 -2px #fff,1px 1px #fff,-1px -1px #fff,1px -1px #fff,-1px 1px #fff,0 0 4px #888}.g{color:#1aae4e}.n{color:#0d5d94}.wrap{display:grid;margin-top:-21px}.wrap>*{grid-area:1/1}.band{height:41px;padding:0 7px 3px 16px;background:linear-gradient(#48c0e8f0,#48c0e8f0) no-repeat 0 0/100% 38px,linear-gradient(#efb837,#efb837) no-repeat 0 38px/100% 3px;clip-path:polygon(12px 0,100% 0,100% 100%,0 100%);text-align:right;font-weight:700;font-size:20px;line-height:37px;text-shadow:2px 0 #125582,-2px 0 #125582,0 2px #125582,0 -2px #125582,1px 1px #125582,-1px -1px #125582}.edge{width:18px;height:41px;background:#efb837;clip-path:polygon(12px 0,15px 0,4px 38px,18px 38px,18px 41px,0 41px)}.pen{position:relative;margin:-24px 0 0 22px;width:22px;height:54px}`,
 `<div class="box"><div class="g">クリスタの超基本</div><div class="n">レイヤーの使い方</div></div><div class="wrap"><div class="band">レイヤーの合成モード</div><div class="edge"></div><svg class="pen" viewBox="0 0 22 54"><path d="M8 1h6v8c1 6 7 10 7 15l-2 9v2h2v18H1V35h2v-2l-2-9C1 19 7 15 8 9z" fill="#fff" stroke="#35b2dd" stroke-width="1.500"/><path d="M11 5v27M2 41h18" stroke="#35b2dd" stroke-width="1.500"/><circle cx="11" cy="32" r="2" fill="#2694c0"/></svg></div>`);

define('task-bar',`:host{display:flex;height:27px;background:#000;color:#fff}.a{display:grid;grid-template-columns:repeat(13,1fr);width:425px}.a .on{background:#333;border-bottom:2px solid #9bd0ee}.ps{color:#35b5ea}.ps>*{grid-area:1/1}.t{display:flex;margin-left:auto;align-items:center;gap:3px}.t .A{font-size:11px}.u{display:flex;align-items:center;margin:0 4px 0 32px;gap:5px}time{text-align:center;line-height:12px;width:40px;padding-top:2px}.n{margin:0 13px}.u .ad{font-size:6px}.ad>*{grid-area:1/1}.s{width:2px;height:27px;background:#333}`,
 `<div class="a">${['winlogo','taskview','edge','chrome','explorer','pschop','paintapp','appwin','studio','paint','note','tablet','wmark'].map(n=>`<button class="${n=='paint'?'on':n=='pschop'?'ps':''}" aria-label="${n}">${ic(n,n=='winlogo'?12:15)}${n=='pschop'?'<span>Ps</span>':''}</button>`).join('')}</div><div class="t">${ic('ime',11)}<span class="A">A</span>${['t1','t2','t3','t4'].map(n=>ic(n,11)).join('')}<div class="u"><button class="ad">${ic('adobe',11)}<span>AQ</span></button>${['shield','memo','pent','snow','net','vol'].map(n=>ic(n,11)).join('')}</div></div><time><div>19:35</div><div>2018/05/25</div></time><button class="n" aria-label="通知">${ic('notif',12)}</button><span class="s"></span>`);

define('paint-app',`:host{display:flex;flex-direction:column;min-height:100vh;position:relative}main{display:flex;flex:1}promo-banner{position:absolute;right:0;top:21px}.cur{position:absolute;right:114px;top:425px}.tip{position:absolute;right:94px;top:442px;background:#fff;color:#444;padding:0 3px;font-size:7px;line-height:11px;border:1px solid #888}`,
 `<title-bar></title-bar><menu-bar></menu-bar><main><tool-box></tool-box><sub-dock></sub-dock><center-area></center-area><material-dock></material-dock><right-dock></right-dock></main><task-bar></task-bar><promo-banner></promo-banner><div class="tip">合成モード</div><div class="cur">${ic('cursor',22)}</div>`);
</script>
</body>
</html>
